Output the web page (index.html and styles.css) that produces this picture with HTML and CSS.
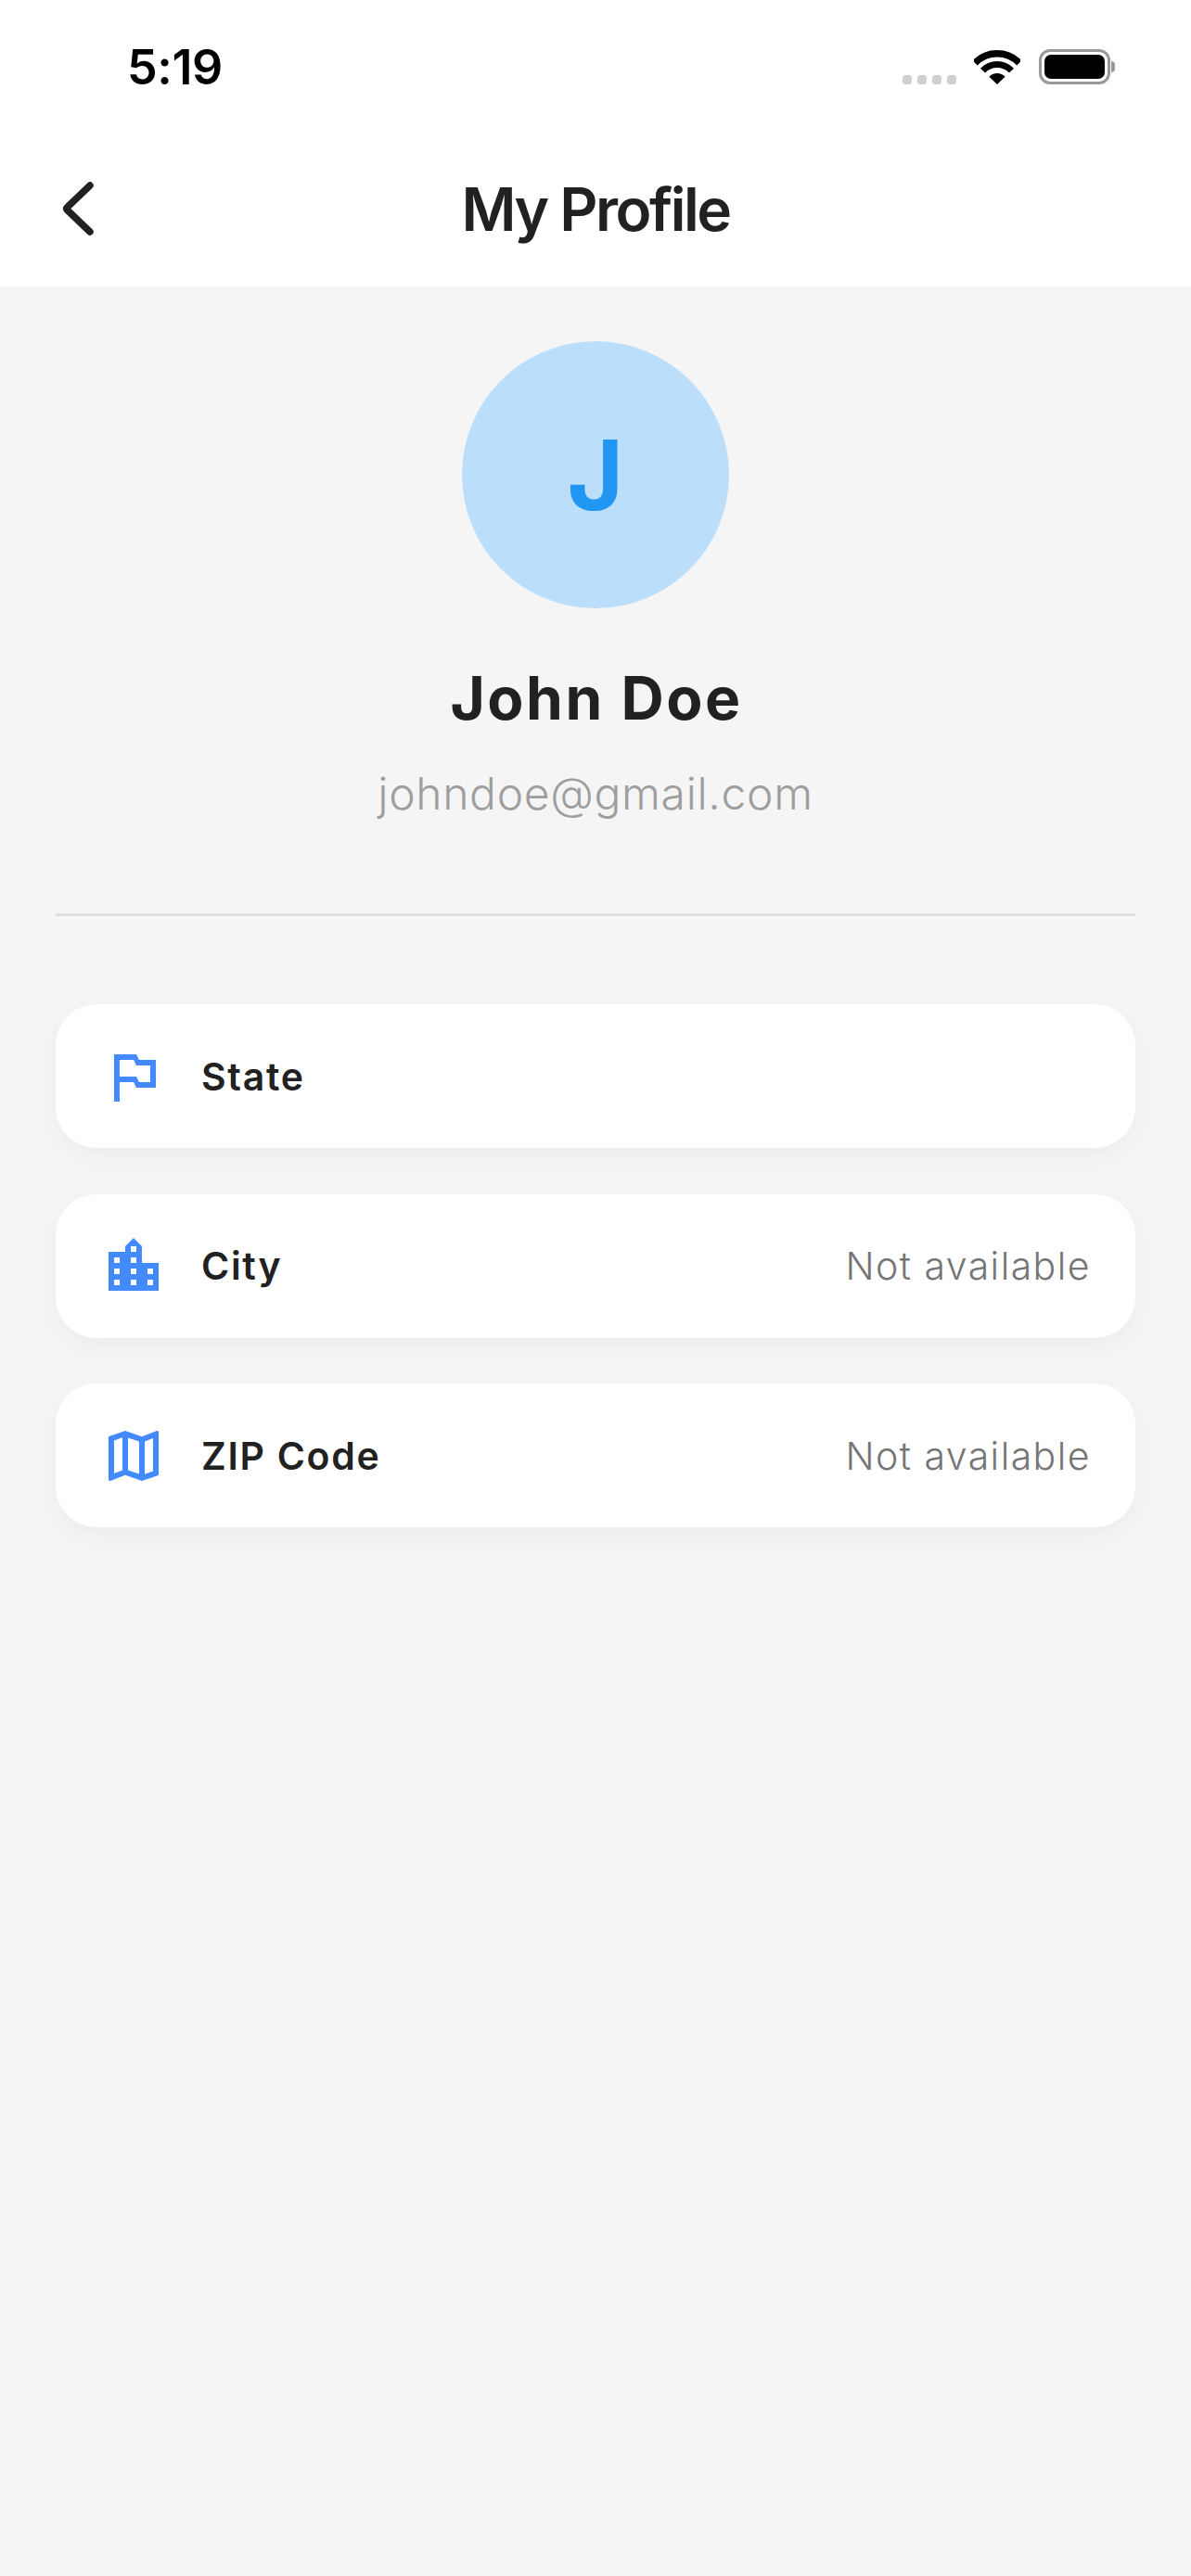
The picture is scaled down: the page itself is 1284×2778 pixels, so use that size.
FILE: index.html
```html
<!DOCTYPE html>
<html lang="en">
  <head>
    <meta charset="UTF-8" />
    <meta name="viewport" content="width=device-width, initial-scale=1.0" />
    <title>My Profile</title>
    <link rel="stylesheet" href="styles.css">
  </head>
  <body>
    <div class="top">
      <div class="status-bar">
        <span class="time">5:19</span>
        <div class="status-icons">
          <div class="signal"><i></i><i></i><i></i><i></i></div>
          <svg class="wifi" viewBox="0 0 50 37" width="50" height="37">
            <path d="M1.1 13.9A33.25 33.25 0 0 1 48.9 13.9" fill="none" stroke="#000" stroke-width="7.5" />
            <path d="M9.5 22.1A21.5 21.5 0 0 1 40.5 22.1" fill="none" stroke="#000" stroke-width="7" />
            <path d="M25 37L16.4 28.7A12 12 0 0 1 33.6 28.7Z" />
          </svg>
          <div class="battery"><div class="battery-level"></div></div>
          <div class="battery-nub"></div>
        </div>
      </div>
      <div class="nav">
        <button class="back" aria-label="Back">
          <svg viewBox="0 0 36 60" width="36" height="60">
            <path d="M30 5L5.5 28.5Q4 30 5.5 31.5L30 55" fill="none" stroke="#212121" stroke-width="7.5" stroke-linecap="round" stroke-linejoin="round" />
          </svg>
        </button>
        <h1 class="title">My Profile</h1>
      </div>
    </div>

    <div class="content">
      <div class="profile">
        <div class="avatar">J</div>
        <div class="name">John Doe</div>
        <div class="email">johndoe@gmail.com</div>
      </div>
      <div class="divider"></div>
      <div class="cards">
        <div class="card">
          <svg class="icon" viewBox="0 0 24 24"><path d="M14 6l-1-2H5v17h2v-7h5l1 2h7V6h-6zm4 8h-4l-1-2H7V6h5l1 2h5v6z" /></svg>
          <span class="label">State</span>
        </div>
        <div class="card">
          <svg class="icon" viewBox="0 0 24 24"><path d="M15 11V5l-3-3-3 3v2H3v14h18V11h-6zm-8 8H5v-2h2v2zm0-4H5v-2h2v2zm0-4H5V9h2v2zm6 8h-2v-2h2v2zm0-4h-2v-2h2v2zm0-4h-2V9h2v2zm0-4h-2V5h2v2zm6 12h-2v-2h2v2zm0-4h-2v-2h2v2z" /></svg>
          <span class="label">City</span>
          <span class="value">Not available</span>
        </div>
        <div class="card">
          <svg class="icon" viewBox="0 0 24 24"><path d="M20.5 3l-.16.03L15 5.1 9 3 3.36 4.9c-.21.07-.36.25-.36.48V20.5c0 .28.22.5.5.5l.16-.03L9 18.9l6 2.1 5.64-1.9c.21-.07.36-.25.36-.48V3.5c0-.28-.22-.5-.5-.5zM10 5.47l4 1.4v11.66l-4-1.4V5.47zm-5 .99l3-1.01v11.7l-3 1.16V6.46zm14 11.08l-3 1.01V6.86l3-1.16v11.84z" /></svg>
          <span class="label">ZIP Code</span>
          <span class="value">Not available</span>
        </div>
      </div>
    </div>
  </body>
</html>
```

FILE: styles.css
```css
html,
body {
  margin: 0;
  padding: 0;
  height: 100%;
  background: #f5f5f5;
  font-family: Inter, "Liberation Sans", sans-serif;
  color: #212121;
}

.top {
  background: #fff;
  height: 309px;
}

.status-bar {
  height: 132px;
  display: flex;
  justify-content: space-between;
  align-items: flex-start;
  padding: 0 82px 0 137px;
}

.time {
  margin-top: 43px;
  font-size: 52px;
  line-height: 60px;
  font-weight: 600;
  letter-spacing: -0.4px;
  color: #000;
}

.status-icons {
  display: flex;
  align-items: flex-end;
  margin-top: 53px;
  height: 38px;
}

.signal {
  display: flex;
  gap: 6px;
  margin-right: 19px;
}

.signal i {
  width: 10px;
  height: 10px;
  border-radius: 3px;
  background: #cfcfcf;
}

.wifi {
  margin-right: 20px;
}

.battery {
  width: 77px;
  height: 38px;
  box-sizing: border-box;
  border: 3px solid #999;
  border-radius: 12px;
  padding: 3px;
}

.battery-level {
  height: 100%;
  background: #000;
  border-radius: 7px;
}

.battery-nub {
  width: 4px;
  height: 12px;
  margin: 0 0 13px 1px;
  background: #999;
  border-radius: 0 4px 4px 0;
}

.nav {
  height: 177px;
  display: flex;
  align-items: center;
  position: relative;
  padding-top: 10px;
  box-sizing: border-box;
}

.back {
  position: absolute;
  left: 67px;
  top: 63px;
  width: 36px;
  height: 60px;
  padding: 0;
  border: none;
  background: none;
}

.title {
  flex: 1;
  margin: 0;
  text-align: center;
  font-size: 64px;
  line-height: 78px;
  font-weight: 600;
  letter-spacing: -2.5px;
}

.content {
  padding: 59px 60px 0;
}

.profile {
  display: flex;
  flex-direction: column;
  align-items: center;
}

.avatar {
  width: 288px;
  height: 288px;
  border-radius: 50%;
  background: #bbdefb;
  color: #2196f3;
  font-size: 104px;
  font-weight: 700;
  display: flex;
  align-items: center;
  justify-content: center;
}

.name {
  margin-top: 58px;
  padding-left: 2px;
  font-size: 64px;
  line-height: 78px;
  font-weight: 700;
  letter-spacing: 2.5px;
}

.email {
  margin-top: 35px;
  font-size: 48px;
  line-height: 58px;
  font-weight: 350;
  color: #9e9e9e;
  letter-spacing: 0.65px;
}

.divider {
  height: 3px;
  margin-top: 100px;
  background: #e0e0e0;
}

.cards {
  display: flex;
  flex-direction: column;
  gap: 49.5px;
  margin-top: 95px;
}

.card {
  height: 155px;
  display: flex;
  align-items: center;
  padding: 0 48px;
  background: #fff;
  border-radius: 44px;
  box-shadow: 0 10px 30px rgba(0, 0, 0, 0.04);
}

.icon {
  width: 72px;
  height: 72px;
  fill: #448aff;
  flex: none;
  margin-right: 37px;
}

.label {
  flex: 1;
  font-size: 41px;
  font-weight: 600;
  letter-spacing: 1.7px;
}

.value {
  font-size: 41px;
  font-weight: 350;
  color: #757575;
  letter-spacing: 1.45px;
}
```
